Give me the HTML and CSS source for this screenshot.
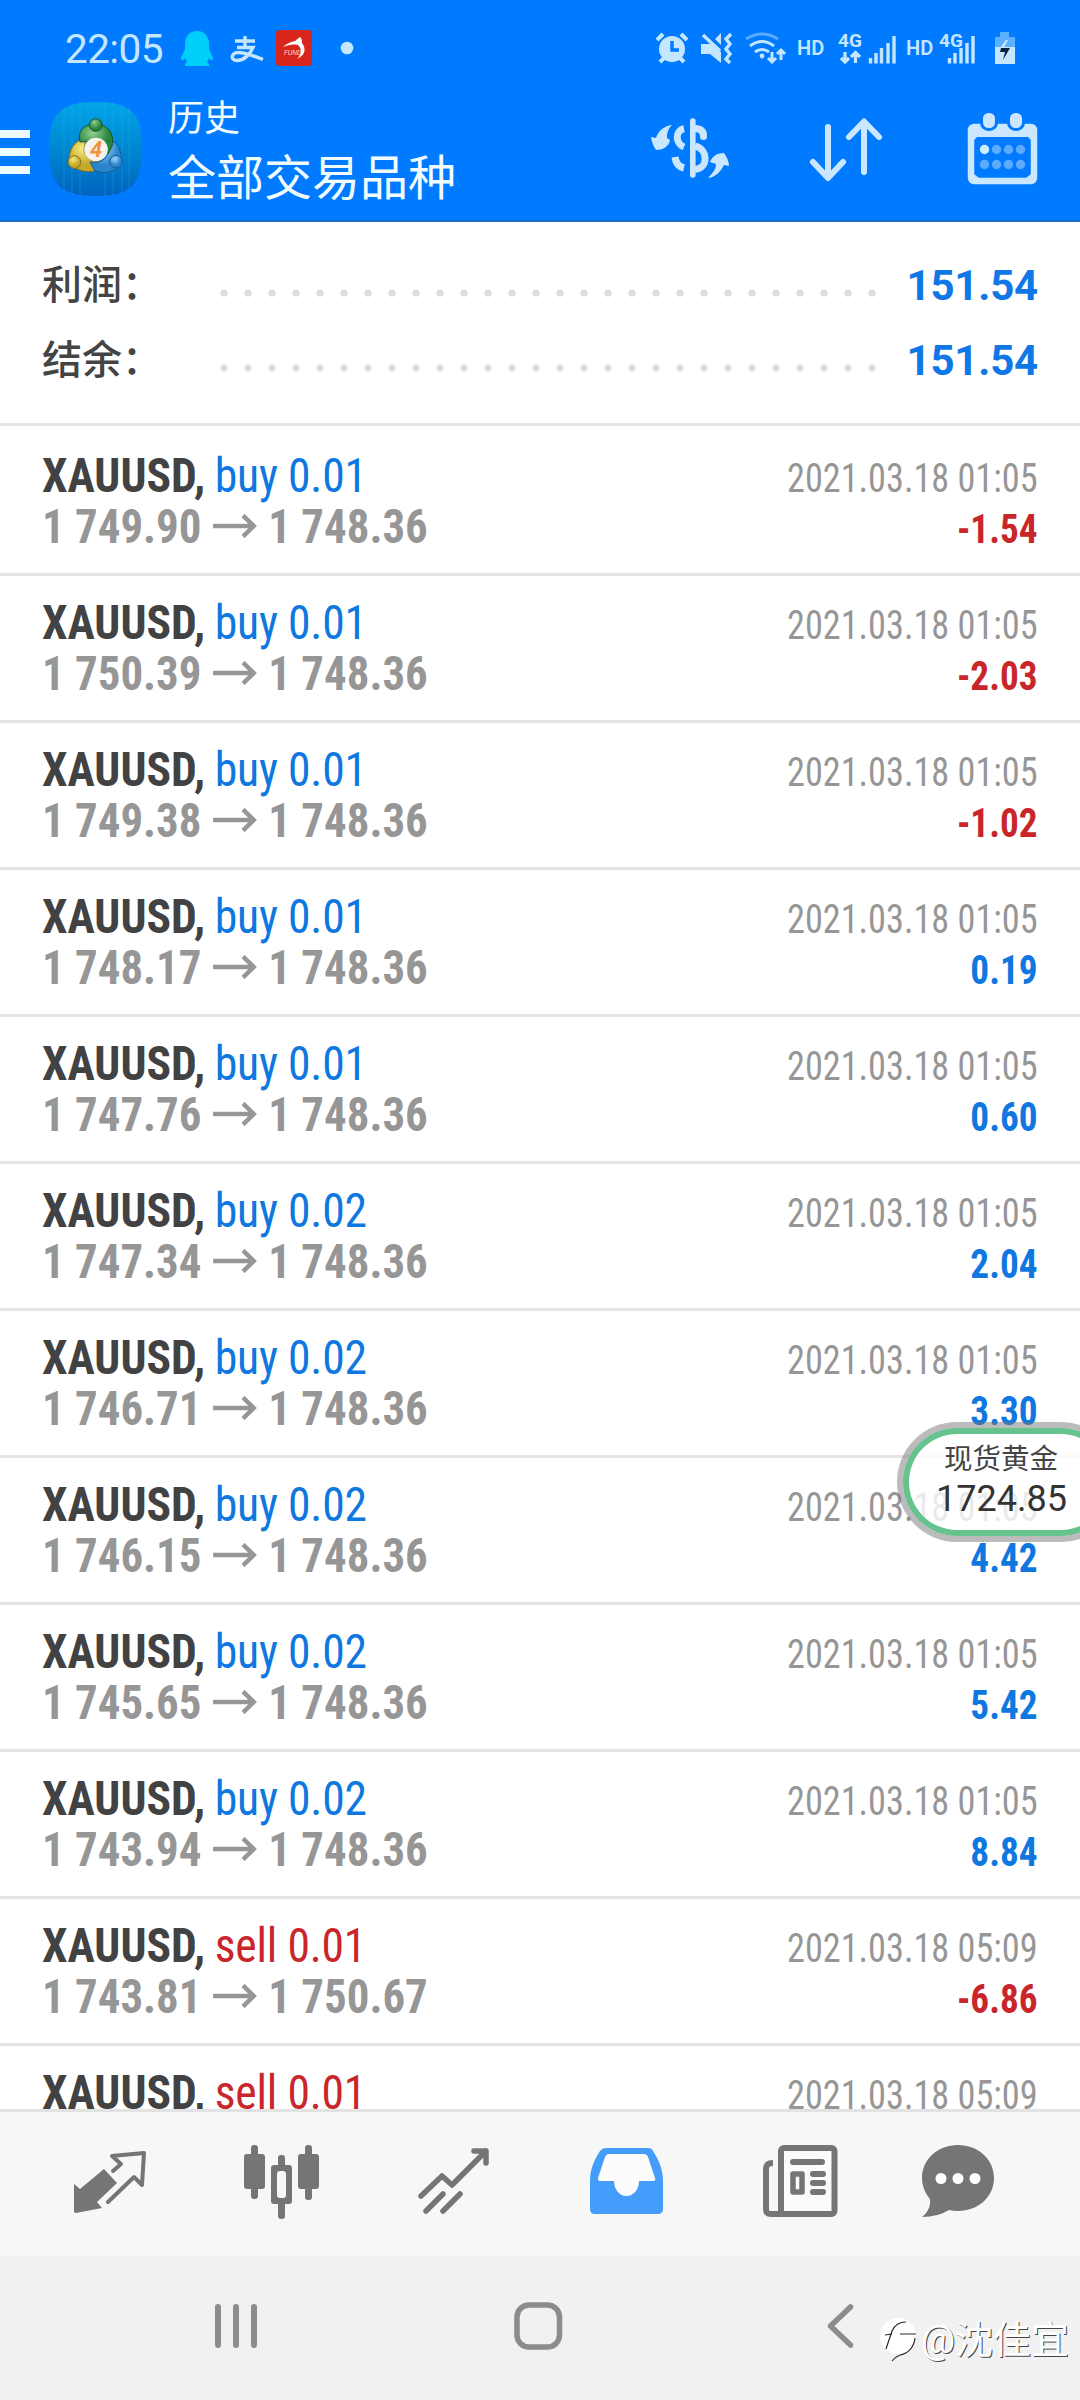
FILE: index.html
```
<!DOCTYPE html>
<html lang="zh-CN">
<head>
<meta charset="utf-8">
<title>历史</title>
<link rel="stylesheet" href="styles.css">
</head>
<body>
<header class="top">
  <div class="status">
    <span class="clock">22:05</span>
    <svg class="status-left" viewBox="176 0 204 94" width="204" height="94">
      <path fill="#00cffc" d="M197 31c8 0 12 6 12 13v5l4 9c0 3-2 3-4 0l-2 4 2 2v2h-24v-2l2-2-2-4c-2 3-4 3-4 0l4-9v-5c0-7 4-13 12-13z"/>
      <g fill="none" stroke="#c4e6ff" stroke-width="3.4"><path d="M235 41h20M245 36v11M237 47.500h16c-3 7-9 13-16 13-7 0-6-8 1-8 8 0 17 4 25 7"/></g>
      <rect x="276" y="30" width="36" height="36" rx="4" fill="#d8261c"/>
      <path fill="#fff" d="M283 47c4-4 8-5 12-6l5-4c2 2 2 4 2 6 4 5 4 12-5 16 5-5 5-10 1-14-5-1-10 0-15 2z"/>
      <text x="284" y="55" class="fund">FUND</text>
      <circle cx="347" cy="48" r="6.3" fill="#c4e6ff"/>
    </svg>
    <svg class="status-right" viewBox="650 0 370 94" width="370" height="94">
      <g fill="#c4e6ff" stroke="#c4e6ff">
        <circle cx="672" cy="49" r="13" stroke="none"/>
        <path d="M657 40l6-6M687 40l-6-6M660 62l5-5M684 62l-5-5" stroke-width="4" fill="none"/>
        <path d="M672 41v9h7" stroke="#007aff" stroke-width="3.5" fill="none"/>
        <path stroke="none" d="M701 44h9l11 8v11l-11-9h-9zM721 33v12l-6-6z"/>
        <path d="M703 35l17 16" stroke-width="3.4" fill="none"/>
        <path d="M731 34l-5 5 4 5-4 5 4 5-4 5 4 4" stroke-width="3.4" fill="none"/>
      </g>
      <g fill="none" stroke="#c4e6ff" stroke-width="3">
        <path opacity=".45" d="M746 39q16-10 32 0"/>
        <path d="M750 46q12-9 24 0M755 52q7-5 14 0"/>
        <path d="M772 52v9M768 58l4 4 4-4M781 60v-9M777 54l4-4 4 4"/>
      </g>
      <circle cx="762" cy="56" r="2.4" fill="#c4e6ff"/>
      <text x="797" y="55" class="net hd">HD</text>
      <text x="838" y="47" class="net">4G</text>
      <path fill="none" stroke="#c4e6ff" stroke-width="3.2" d="M845 52v10M841 58l4 4 4-4M855.500 63V53M851 57l4.500-4.500 4.500 4.500"/>
      <path stroke="#c4e6ff" stroke-width="3.4" d="M870.500 58v5.500M876 53v10.500M881.500 48v15.500M888 43v20.500M894 36v27.500"/>
      <text x="906" y="55" class="net hd">HD</text>
      <text x="939" y="47" class="net">4G</text>
      <path stroke="#c4e6ff" stroke-width="3.4" d="M949.500 58v5.500M955 53v10.500M961 48v15.500M967 43v20.500M973 36v27.500"/>
      <path fill="#5cb0ff" d="M1000 32h9v5h6v10h-20V37h5z"/>
      <path fill="#c4e6ff" d="M995 47h20v17h-20z"/>
      <path fill="#c4e6ff" d="M1006 40l2 0-4 8h-4z"/>
      <path fill="#0b2340" d="M1001 48h9l-7 12 2-8h-5z"/>
    </svg>
  </div>
  <div class="bar">
    <svg class="menu" viewBox="0 94 160 126" width="160" height="126">
      <defs>
        <linearGradient id="sky" x1="0" y1="0" x2="0" y2="1"><stop offset="0" stop-color="#00a5e8"/><stop offset=".55" stop-color="#0084cf"/><stop offset="1" stop-color="#0063c0"/></linearGradient>
        <radialGradient id="gr" cx=".4" cy=".3"><stop offset="0" stop-color="#8fd08a"/><stop offset="1" stop-color="#2a8440"/></radialGradient>
        <radialGradient id="ye" cx=".4" cy=".3"><stop offset="0" stop-color="#f8ea7c"/><stop offset="1" stop-color="#c4a82a"/></radialGradient>
        <radialGradient id="bl" cx=".4" cy=".3"><stop offset="0" stop-color="#9bd5f8"/><stop offset="1" stop-color="#2a84cc"/></radialGradient>
      </defs>
      <path fill="#ecfbff" d="M0 130h30v8H0zM0 148h30v8H0zM0 166h30v8H0z"/>
      <path fill="url(#sky)" d="M96 102c36 0 46 12 46 47s-10 47-46 47-47-12-47-47 11-47 47-47z"/>
      <path stroke="#35b6ec" stroke-opacity=".3" d="M64 106v86M72 103v92M80 102v94M105 102v94M113 102v94M122 103v92M129 106v86"/>
      <g stroke="#14552b" stroke-width="1">
        <path fill="url(#ye)" d="M86 139c-12 0-17 12-17 22 4 8 14 12 25 10l8-10c-10 2-18-4-18-12z" stroke="#86731a"/>
        <path fill="url(#bl)" d="M108 138c9 4 15 13 13 25-4 8-15 12-26 8l-5-9c10 2 18-3 18-12z" stroke="#155b96"/>
        <path fill="url(#gr)" d="M80 142c-3-12 5-18 16-18s19 9 16 22l-4 8c-2-10-9-14-15-13-5 0-10 1-13 1z"/>
        <circle cx="95.700" cy="125" r="6.300" fill="url(#gr)"/>
        <circle cx="74.500" cy="162" r="6.300" fill="url(#ye)" stroke="#86731a"/>
        <circle cx="116" cy="161.500" r="6.300" fill="url(#bl)" stroke="#155b96"/>
      </g>
      <circle cx="96" cy="149.500" r="11.800" fill="#f6f3ef"/>
      <text x="96" y="157" class="four">4</text>
    </svg>
    <div class="titles">
      <div class="title">历史</div>
      <div class="subtitle">全部交易品种</div>
    </div>
    <svg class="actions" viewBox="640 94 440 126" width="440" height="126">
      <g fill="none" stroke="#cbe7ff" stroke-width="6" stroke-linecap="round" stroke-linejoin="round">
        <path d="M692.800 121v54" stroke-width="5.600"/>
        <path d="M696 128.500q8 1 7.500 8" stroke-width="7"/>
        <path d="M695 146c13 3 14 22 0 23.500" stroke-width="7" stroke-linecap="butt"/>
        <path d="M684 128.500c-9 2-9 15 0 18.500" stroke-width="7" stroke-linecap="butt"/>
        <path d="M684 168q-8-2-9-11" stroke-width="7" stroke-linecap="butt"/>
        <path d="M828 127v50M813 162l15 16 15-16M864 172v-50M849 137l15-15.500 15 15.500"/>
      </g>
      <path fill="#cbe7ff" d="M672 125c-5 5-5 9-5 13l3 2c-1 7-8 10-14 10-3-4-4-8-5-13l5 1c2-7 8-12 16-13zM708 178c6-6 8-10 8-14l-6-2c2-5 6-9 14-9 3 4 5 9 5 13l-5-1c-3 6-8 12-16 13z"/>
      <rect x="971" y="127" width="63" height="54" rx="3" fill="none" stroke="#cbe7ff" stroke-width="6.500"/>
      <path fill="#cbe7ff" d="M970 126h65v11h-65z"/>
      <path fill="#cbe7ff" d="M974 135l5 0-5 5zM1031 135l-5 0 5 5zM974 178v-4l5 4zM1031 178v-4l-5 4z"/>
      <g fill="#cbe7ff" stroke="#007aff" stroke-width="3"><rect x="981.500" y="111.500" width="15" height="18" rx="7"/><rect x="1008.500" y="111.500" width="15" height="18" rx="7"/></g>
      <g fill="#5cabff"><circle cx="996.500" cy="149.500" r="4.700"/><circle cx="1008.500" cy="149.500" r="4.700"/><circle cx="1020.500" cy="149.500" r="4.700"/><circle cx="984.500" cy="164.500" r="4.700"/><circle cx="996.500" cy="164.500" r="4.700"/><circle cx="1008.500" cy="164.500" r="4.700"/><circle cx="1020.500" cy="164.500" r="4.700"/></g>
      <circle cx="984.500" cy="149.500" r="4.700" fill="#cbefff"/>
    </svg>
  </div>
</header>

<section class="summary">
  <div class="sum"><span class="sum-name">利润：</span><span class="dots"></span><span class="sum-value">151.54</span></div>
  <div class="sum"><span class="sum-name">结余：</span><span class="dots"></span><span class="sum-value">151.54</span></div>
</section>

<main class="deals" id="deals"></main>

<nav class="tabs">
  <svg viewBox="23 2112 173 144"><g fill="#757575"><path d="M104 2169l13 14-20 19 5 6-26 5c-1 0-2-1-2-2v-27l6 5z"/></g>
    <path fill="none" stroke="#757575" stroke-width="4" stroke-linejoin="round" stroke-linecap="round" d="M113 2171l8-7-9-8 32-3-2 32-8-8-26 25"/></svg>
  <svg viewBox="196 2112 173 144"><g fill="#757575"><rect x="244" y="2154" width="21" height="35" rx="3"/><rect x="298" y="2154" width="21" height="35" rx="3"/><rect x="251" y="2145" width="7" height="54" rx="3"/><rect x="305" y="2145" width="7" height="55" rx="3"/><rect x="278" y="2155" width="7" height="64" rx="3"/><rect x="271" y="2165" width="21" height="39" rx="3"/></g><rect x="277" y="2171" width="9" height="27" rx="3" fill="#f7f7f7"/></svg>
  <svg viewBox="369 2112 173 144"><path fill="none" stroke="#757575" stroke-width="5.500" stroke-linejoin="round" stroke-linecap="round" d="M421 2196l21-20 10 9 34-34M474 2151h12v12M426 2211l17-17M443 2211l17-17"/></svg>
  <svg viewBox="542 2112 173 144"><path fill="#449dfb" d="M606 2148h42c3 0 4 1 5 3 6 9 10 19 10 30v28c0 3-2 5-5 5h-63c-3 0-5-2-5-5v-28c0-11 4-21 10-30 2-2 3-3 6-3z"/><path fill="#fcfcfc" d="M609 2154c-2 0-3 1-4 3l-7 21c0 2 0 3 2 3h14c0 8 5 15 12.500 15s12.500-7 12.500-15h14c2 0 3-1 2-3l-7-21c-1-2-2-3-4-3z"/></svg>
  <svg viewBox="715 2112 173 144"><g fill="#fbfbfb" stroke="#757575" stroke-width="6" stroke-linejoin="round"><path d="M773 2163c-5 0-7 2-7 6v40c0 4 2 5 5 5h12" fill="none"/><rect x="781" y="2148" width="53.500" height="66" rx="3"/><path d="M793 2162h29M813 2174h10M813 2183h10M813 2192h10" stroke-linecap="round"/><path d="M793 2174h9v18h-9z" stroke-width="5.500"/></g></svg>
  <svg viewBox="888 2112 173 144"><path fill="#757575" d="M958 2145c20 0 36 14 36 33s-16 33-36 33q-5 0-9-1-11 7-27 7c5-4 9-10 8-18-5-6-8-13-8-21 0-19 16-33 36-33z"/><g fill="#fff"><circle cx="941" cy="2178.500" r="5.500"/><circle cx="958" cy="2178.500" r="5.500"/><circle cx="975" cy="2178.500" r="5.500"/></g></svg>
</nav>

<footer class="system">
  <svg viewBox="0 2256 360 144"><path stroke="#8c8c8c" stroke-width="6" stroke-linecap="round" d="M218 2307v38M236 2307v38M254 2307v38"/></svg>
  <svg viewBox="360 2256 360 144"><rect x="517" y="2305" width="42.500" height="42" rx="12" fill="none" stroke="#8c8c8c" stroke-width="5.500"/></svg>
  <svg viewBox="720 2256 360 144"><path fill="none" stroke="#8c8c8c" stroke-width="5.500" stroke-linecap="round" stroke-linejoin="round" d="M850.500 2307l-20 19 20 19"/></svg>
</footer>

<aside class="quote">
  <div class="quote-name">现货黄金</div>
  <div class="quote-price">1724.85</div>
</aside>

<div class="mark">
  <svg viewBox="878 2318 40 48" width="40" height="48"><circle cx="898" cy="2339" r="18" fill="#fff"/><g fill="none" stroke="#2b2b2b" stroke-width="1.200"><path d="M886 2352l6-18q4-9 14-9M885 2338l7-1M900 2337h16M915 2341c-1 10-8 16-15 17q-5 2-8 6"/></g></svg><span>@沈佳宜</span>
</div>
<script src="deals.js"></script>
</body>
</html>
```
FILE: deals.js
```
const deals = [
  ["buy 0.01", "1 749.90", "1 748.36", "2021.03.18 01:05", "-1.54"],
  ["buy 0.01", "1 750.39", "1 748.36", "2021.03.18 01:05", "-2.03"],
  ["buy 0.01", "1 749.38", "1 748.36", "2021.03.18 01:05", "-1.02"],
  ["buy 0.01", "1 748.17", "1 748.36", "2021.03.18 01:05", "0.19"],
  ["buy 0.01", "1 747.76", "1 748.36", "2021.03.18 01:05", "0.60"],
  ["buy 0.02", "1 747.34", "1 748.36", "2021.03.18 01:05", "2.04"],
  ["buy 0.02", "1 746.71", "1 748.36", "2021.03.18 01:05", "3.30"],
  ["buy 0.02", "1 746.15", "1 748.36", "2021.03.18 01:05", "4.42"],
  ["buy 0.02", "1 745.65", "1 748.36", "2021.03.18 01:05", "5.42"],
  ["buy 0.02", "1 743.94", "1 748.36", "2021.03.18 01:05", "8.84"],
  ["sell 0.01", "1 743.81", "1 750.67", "2021.03.18 05:09", "-6.86"],
  ["sell 0.01", "", "", "2021.03.18 05:09", ""]
];
const arrow = '<svg class="arrow" viewBox="0 0 47 24" width="47" height="24"><path d="M0 12h44M32 1.500l11.500 10.500L32 22.500"/></svg>';
document.getElementById("deals").innerHTML = deals.map(([op, from, to, time, profit]) => `
  <article class="deal">
    <div class="left">
      <div class="line head"><b>XAUUSD,</b> <span class="op ${op.startsWith("buy") ? "up" : "down"}">${op}</span></div>
      ${from ? `<div class="line prices">${from}${arrow}${to}</div>` : ""}
    </div>
    <div class="right">
      <div class="line time">${time}</div>
      ${profit ? `<div class="line profit ${profit.startsWith("-") ? "down" : "up"}">${profit}</div>` : ""}
    </div>
  </article>`).join("");
```
FILE: styles.css
```
* { box-sizing: border-box; }
body {
  margin: 0;
  width: 1080px;
  height: 2400px;
  display: flex;
  flex-direction: column;
  position: relative;
  overflow: hidden;
  background: #fff;
  color: #444;
  font-family: Roboto, "Noto Sans CJK SC", sans-serif;
}
svg { display: block; flex: none; }

/* Header */
.top { height: 222px; flex: none; background: #007aff; border-bottom: 2px solid #1c6fc4; }
.status { height: 94px; display: flex; align-items: center; padding-left: 65px; }
.clock { width: 111px; padding-top: 4px; font-size: 40.5px; letter-spacing: -.6px; color: #c4e6ff; }
.status-right { margin-left: 270px; }
.net { font: 700 19px Roboto, sans-serif; fill: #c4e6ff; }
.hd { font-weight: 600; font-size: 20px; }
.fund { font: italic 400 7px Roboto, sans-serif; fill: #ffd9d0; }
.four { font: italic 700 22px Roboto, sans-serif; fill: #f0933f; text-anchor: middle; }
.bar { height: 126px; display: flex; }
.titles { width: 480px; padding: 0 0 0 8px; color: #f0fcff; }
.title { margin-top: 3px; font-size: 36px; line-height: 44px; }
.subtitle { margin-top: 9px; font-size: 48px; line-height: 58px; }

/* Totals */
.summary { flex: none; height: 204px; padding: 24px 42px 0; border-bottom: 3px solid #e4e4e4; }
.sum { height: 75px; display: flex; align-items: center; }
.sum-name { width: 178px; margin-top: -4px; font-size: 40px; font-weight: 500; }
.dots { width: 672px; height: 8px; margin-top: 18px; background: radial-gradient(circle at 4px 4px, #dcdcdc 3.2px, transparent 4px) 0 0 / 24px 8px; }
.sum-value { margin-left: auto; margin-top: 3px; font-size: 42px; letter-spacing: -.2px; font-weight: 700; color: #0f77e6; }

/* Deals */
.deals { flex: none; height: 1683px; padding-top: 3px; overflow: hidden; }
.deal { height: 147px; display: flex; justify-content: space-between; padding: 0 42px; border-bottom: 3px solid #e4e4e4; font-stretch: 75%; }
.left { padding-top: 21px; }
.right { padding-top: 24px; text-align: right; }
.line { height: 51px; line-height: 51px; white-space: nowrap; font-size: 48px; }
.head { transform: scaleX(.95); transform-origin: left; color: #424242; }
.op { margin-left: -1px; letter-spacing: -.2px; }
.up { color: #0f77e0; }
.down { color: #c9262b; }
.prices { display: flex; align-items: center; transform: scaleX(.935); transform-origin: left; font-weight: 700; color: #969696; }
.arrow { margin: -2px 12.500px 0 12px; }
.arrow path { fill: none; stroke: #969696; stroke-width: 4.500; }
.right .line { font-size: 40px; transform-origin: right; }
.time { color: #969696; transform: scaleX(.906); }
.profit { font-weight: 700; transform: scaleX(.93); }

/* Bottom bars */
.tabs { flex: none; height: 147px; padding-left: 23px; display: flex; background: #f7f7f7; border-top: 3px solid #e2e2e2; }
.tabs svg { width: 173px; height: 144px; }
.system { flex: none; height: 144px; display: flex; background: #f1f1f1; }
.system svg { width: 360px; height: 144px; }

/* Floating quote */
.quote {
  position: absolute;
  left: 897px;
  top: 1422px;
  width: 224px;
  height: 120px;
  padding: 14px 0 0 33px;
  border: 6px solid rgba(120, 120, 120, .5);
  border-radius: 60px;
  background: rgba(255, 255, 255, .8);
  background-clip: padding-box;
  box-shadow: inset 0 0 0 6px #66c38d;
  color: #333;
}
.quote-name { padding-left: 8px; font-size: 28.500px; line-height: 36px; color: #444; }
.quote-price { font-size: 36px; line-height: 42px; }

/* Author mark */
.mark { position: absolute; left: 878px; top: 2315px; display: flex; color: #fff; font-size: 38px; line-height: 50px; text-shadow: 1px 1px 0 #444; }
.mark span { margin-left: 3px; }
```
